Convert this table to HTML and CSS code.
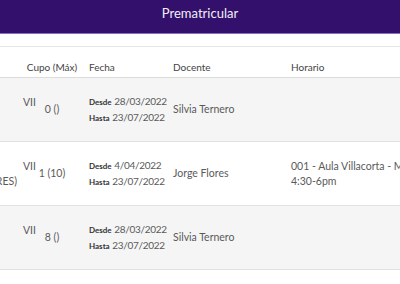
FILE: index.html
```
<!DOCTYPE html>
<html lang="es">
<head>
<meta charset="utf-8">
<title>Prematricular</title>
<link rel="stylesheet" href="styles.css">
</head>
<body>
<header class="topbar">Prematricular</header>
<div class="toolbar"></div>
<div class="table-wrap">
  <div class="table">
    <div class="row head">
      <div class="cell c1"></div>
      <div class="cell c2">Cupo (Máx)</div>
      <div class="cell c3">Fecha</div>
      <div class="cell c4">Docente</div>
      <div class="cell c5">Horario</div>
    </div>
    <div class="row alt">
      <div class="cell c1"><span class="l1">VII</span><span class="l2">&nbsp;</span></div>
      <div class="cell c2">0 ()</div>
      <div class="cell c3"><span class="d"><b>Desde</b> <span class="dt">28/03/2022</span></span><span class="d"><b>Hasta</b> <span class="dt">23/07/2022</span></span></div>
      <div class="cell c4">Silvia Ternero</div>
      <div class="cell c5"></div>
    </div>
    <div class="row">
      <div class="cell c1"><span class="l1">VII</span><span class="l2">(TALLERES)</span></div>
      <div class="cell c2">1 (10)</div>
      <div class="cell c3"><span class="d"><b>Desde</b> <span class="dt">4/04/2022</span></span><span class="d"><b>Hasta</b> <span class="dt">23/07/2022</span></span></div>
      <div class="cell c4">Jorge Flores</div>
      <div class="cell c5"><span class="d">001 - Aula Villacorta - Miércoles</span><span class="d">4:30-6pm</span></div>
    </div>
    <div class="row alt">
      <div class="cell c1"><span class="l1">VII</span><span class="l2">&nbsp;</span></div>
      <div class="cell c2">8 ()</div>
      <div class="cell c3"><span class="d"><b>Desde</b> <span class="dt">28/03/2022</span></span><span class="d"><b>Hasta</b> <span class="dt">23/07/2022</span></span></div>
      <div class="cell c4">Silvia Ternero</div>
      <div class="cell c5"></div>
    </div>
  </div>
</div>
</body>
</html>
```
FILE: styles.css
```
html, body {
  margin: 0;
  padding: 0;
  background: #fff;
}
body {
  font-family: Lato, "Noto Sans", sans-serif;
  color: #5a5a5a;
  width: 400px;
  overflow: hidden;
}
.topbar {
  height: 33px;
  background: #33106b;
  border-bottom: 1px solid #8a6cc0;
  color: #f2eefa;
  font-size: 13px;
  line-height: 26px;
  text-align: center;
}
.toolbar {
  height: 12px;
  border-bottom: 1px solid #e6e6e6;
}
.table-wrap {
  overflow: hidden;
}
.table {
  width: 560px;
  margin-left: -60px;
}
.row {
  display: grid;
  grid-template-columns: 80px 64px 84px 118px 1fr;
  height: 63px;
  border-bottom: 1px solid #e2e2e2;
  font-size: 10.5px;
  line-height: 15px;
}
.row.alt {
  background: #f5f5f5;
}
.row.head {
  height: 30px;
  border-bottom: 1px solid #dcdcdc;
  color: #444;
  font-size: 10px;
}
.cell {
  display: flex;
  flex-direction: column;
  justify-content: center;
  padding: 0 5px;
  white-space: nowrap;
  min-width: 0;
}
.head .cell {
  justify-content: flex-start;
  align-items: flex-start;
  padding-top: 13px;
}
.c1 {
  text-align: right;
  padding-right: 3px;
}
.c1 .l1 {
  display: block;
  margin-right: -19px;
}
.c1 .l2 {
  display: block;
}
.c2 {
  text-align: center;
}
.head .c2 {
  align-items: center;
}
.c3 {
  font-size: 10px;
}
.d {
  display: block;
}
.dt {
  letter-spacing: -0.3px;
}
.d b {
  font-size: 8px;
  font-weight: 700;
  color: #333;
}
```
